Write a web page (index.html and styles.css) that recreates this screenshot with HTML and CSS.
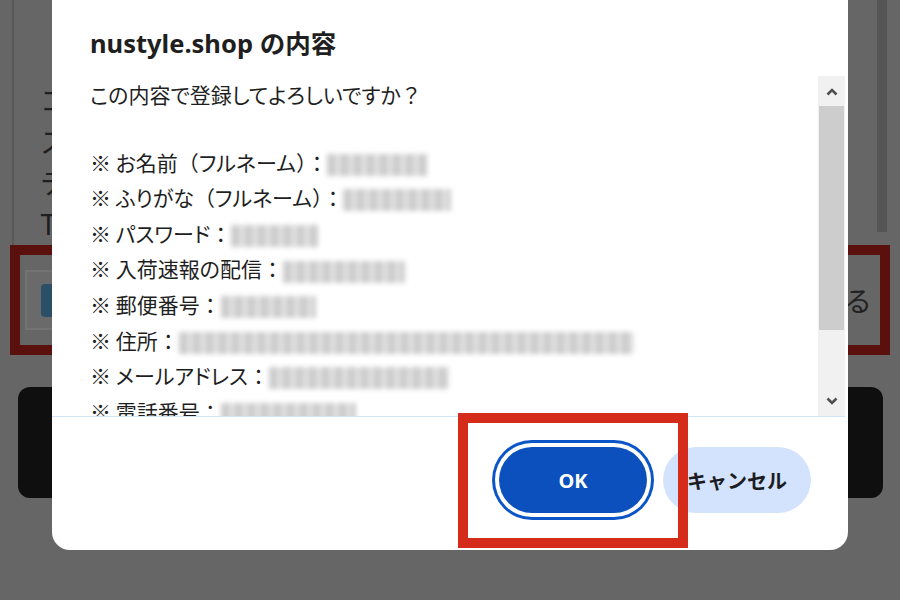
FILE: index.html
```html
<!DOCTYPE html>
<html lang="ja">
<head>
<meta charset="UTF-8" />
<meta name="viewport" content="width=device-width, initial-scale=1" />
<title>nustyle.shop の内容</title>
<link rel="stylesheet" href="styles.css">
</head>
<body>
  <div class="screen">
    <!-- page behind the dimmed overlay -->
    <div class="site">
      <div class="site-top">
        <div class="site-text">
          <p>コンテンツ</p>
          <p>ステータス</p>
          <p>テキスト</p>
          <p>Text</p>
        </div>
        <div class="site-scroll"></div>
      </div>
      <div class="site-consent">
        <div class="site-check"><span></span></div>
        <span class="site-consent-label">同意する</span>
      </div>
      <div class="site-submit"></div>
    </div>

    <!-- confirm dialog -->
    <div class="dialog">
      <h1 class="dialog-title">nustyle.shop の内容</h1>
      <div class="dialog-scroll">
        <div class="dialog-message">
          <p class="lead">この内容で登録してよろしいですか<span class="fw">？</span></p>
          <p>※ お名前<span class="fw">（</span>フルネーム<span class="fw">）：</span><span class="blur w-100"></span></p>
          <p>※ ふりがな<span class="fw">（</span>フルネーム<span class="fw">）：</span><span class="blur w-108"></span></p>
          <p>※ パスワード<span class="fw">：</span><span class="blur w-87"></span></p>
          <p>※ 入荷速報の配信<span class="fw">：</span><span class="blur w-122"></span></p>
          <p>※ 郵便番号<span class="fw">：</span><span class="blur w-95"></span></p>
          <p>※ 住所<span class="fw">：</span><span class="blur w-455"></span></p>
          <p>※ メールアドレス<span class="fw">：</span><span class="blur w-180"></span></p>
          <p>※ 電話番号<span class="fw">：</span><span class="blur w-135"></span></p>
        </div>
        <div class="scrollbar">
          <div class="sb-btn">
            <svg width="12" height="9" viewBox="0 0 12 9"><polyline points="1.5,7.5 6,3 10.5,7.5" fill="none" stroke="#505050" stroke-width="2.6"/></svg>
          </div>
          <div class="sb-track"><div class="sb-thumb"></div></div>
          <div class="sb-btn">
            <svg width="12" height="9" viewBox="0 0 12 9"><polyline points="1.5,1.5 6,6 10.5,1.5" fill="none" stroke="#505050" stroke-width="2.6"/></svg>
          </div>
        </div>
      </div>
      <div class="dialog-footer">
        <button class="btn btn-ok">OK</button>
        <button class="btn btn-cancel">キャンセル</button>
      </div>
    </div>

    <div class="highlight"></div>
  </div>
</body>
</html>
```

FILE: styles.css
```css
body {
  margin: 0;
  font-family: "Noto Sans", "Noto Sans CJK JP", sans-serif;
}

p {
  margin: 0;
}

.screen {
  position: relative;
  width: 900px;
  height: 600px;
  overflow: hidden;
  background: #666666;
}

/* Page behind the overlay */
.site-top {
  display: flex;
  justify-content: space-between;
  height: 245px;
  margin: 0 13px 0 12px;
  border-left: 2px solid #585858;
}

.site-text {
  padding: 80px 0 0 26px;
  font-family: "Noto Sans CJK JP", sans-serif;
  font-size: 28px;
  line-height: 41px;
  color: #1f1f1f;
  white-space: nowrap;
}

.site-scroll {
  width: 10px;
  height: 232px;
  background: #555555;
}

.site-consent {
  display: flex;
  align-items: center;
  justify-content: space-between;
  box-sizing: border-box;
  width: 880px;
  height: 110px;
  margin-left: 10px;
  padding: 0 8px 0 5px;
  border: 10px solid #5a100c;
}

.site-check {
  display: flex;
  align-items: center;
  box-sizing: border-box;
  width: 62px;
  height: 60px;
  padding-left: 14px;
  background: #6a6a6a;
  border: 2px solid #737373;
}

.site-check span {
  width: 30px;
  height: 33px;
  background: #2b4f66;
  border-radius: 4px;
}

.site-consent-label {
  font-family: "Noto Sans CJK JP", sans-serif;
  font-size: 28px;
  color: #222;
}

.site-submit {
  width: 865px;
  height: 111px;
  margin: 32px 0 0 18px;
  background: #0f0f0f;
  border-radius: 12px;
}

/* Dialog */
.dialog {
  position: absolute;
  top: -20px;
  left: 52px;
  display: flex;
  flex-direction: column;
  width: 796px;
  height: 570px;
  background: #fff;
  border-radius: 18px;
  color: #1f1f1f;
}

.dialog-title {
  margin: 0;
  padding: 48px 38px 18px;
  font-size: 25.5px;
  font-weight: 700;
  line-height: 30px;
}

.dialog-scroll {
  display: flex;
  height: 340px;
  margin-right: 3px;
  border-bottom: 1px solid #d2e3fc;
}

.dialog-message {
  flex: 1;
  overflow: hidden;
  padding: 1px 0 0 38px;
  font-family: "Noto Sans CJK JP", sans-serif;
  font-size: 21px;
  line-height: 35.6px;
  font-feature-settings: "palt";
  white-space: nowrap;
}

/* full-width brackets and colons keep their em box */
.dialog-message .fw {
  font-feature-settings: normal;
}

.dialog-message .lead {
  margin-bottom: 32px;
}

.blur {
  display: inline-block;
  height: 22px;
  vertical-align: middle;
  background: repeating-linear-gradient(90deg, #cdcdcd 0 9px, #e6e6e6 9px 13px);
  filter: blur(2.5px);
}

.w-87 { width: 87px; }
.w-95 { width: 95px; }
.w-100 { width: 100px; }
.w-108 { width: 108px; }
.w-122 { width: 122px; }
.w-135 { width: 135px; }
.w-180 { width: 180px; }
.w-455 { width: 455px; }

/* Fake scrollbar */
.scrollbar {
  display: flex;
  flex-direction: column;
  width: 27px;
  background: #f1f1f1;
}

.sb-btn {
  display: flex;
  align-items: center;
  justify-content: center;
  height: 30px;
}

.sb-track {
  flex: 1;
}

.sb-thumb {
  height: 224px;
  margin: 0 1px;
  background: #cdcdcd;
}

.dialog-footer {
  flex: 1;
  display: flex;
  justify-content: flex-end;
  align-items: flex-start;
  gap: 16px;
  padding: 30px 37px 0 0;
}

.btn {
  width: 148px;
  height: 66px;
  border: none;
  border-radius: 33px;
  font-family: "Noto Sans", "Noto Sans CJK JP", sans-serif;
  font-size: 20px;
  font-weight: 700;
}

.btn-ok {
  background: #0b50bc;
  color: #fff;
  box-shadow: 0 0 0 4px #fff, 0 0 0 7px #0b55c8;
}

.btn-cancel {
  background: #d3e3fd;
  color: #1b1c22;
}

/* Annotation box drawn over the screenshot */
.highlight {
  position: absolute;
  top: 413px;
  left: 458px;
  box-sizing: border-box;
  width: 230px;
  height: 135px;
  border: 10px solid #d42b1b;
}
```
